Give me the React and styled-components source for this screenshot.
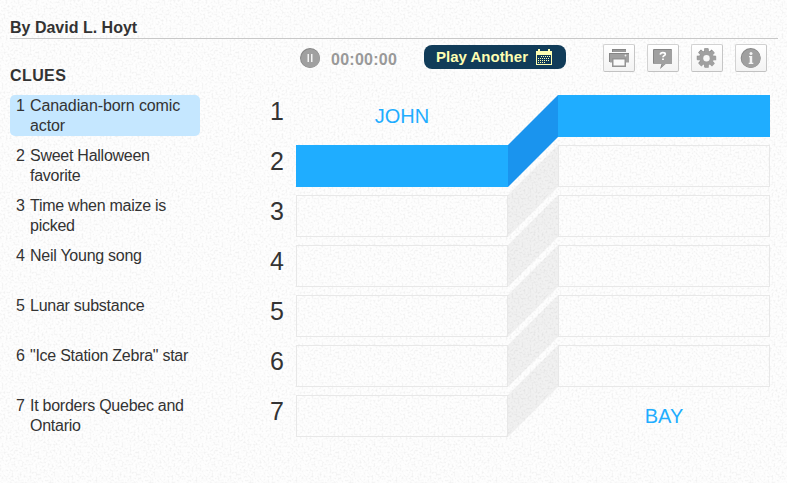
import React from "react";
import styled, { createGlobalStyle } from "styled-components";

const grain = encodeURIComponent(
  `<svg xmlns="http://www.w3.org/2000/svg" width="100" height="100"><filter id="n" x="0" y="0" width="100%" height="100%"><feTurbulence type="fractalNoise" baseFrequency="0.5" numOctaves="2" seed="4" stitchTiles="stitch"/><feColorMatrix values="0 0 0 0 0.5  0 0 0 0 0.5  0 0 0 0 0.5  0.55 0 0 0 -0.24"/></filter><rect width="100" height="100" filter="url(#n)"/></svg>`
);

const clues = [
  "Canadian-born comic actor",
  "Sweet Halloween favorite",
  "Time when maize is picked",
  "Neil Young song",
  "Lunar substance",
  '"Ice Station Zebra" star',
  "It borders Quebec and Ontario",
];

const links = [0, 1, 2, 3, 4, 5];

const PauseIcon = () => (
  <svg width="20" height="20" viewBox="0 0 20 20">
    <circle cx="10" cy="10" r="10" fill="#858585" />
    <circle cx="10.4" cy="10.4" r="9.4" fill="#a0a0a0" />
    <path d="M7.5 6h1.500v8H7.500zM11 6h1.500v8H11z" fill="#f4f4f4" />
  </svg>
);

const CalendarIcon = () => (
  <svg width="16" height="17" viewBox="0 0 16 17" shapeRendering="crispEdges">
    <path d="M0 2h2V0h2v2h8V0h2v2h2v14H0z" fill="#ffffb3" />
    <path d="M1 6h14v9H1z" fill="#113c59" />
    <path
      d="M5 7.500h9M2 9.500h12M2 11.500h12M2 13.500h7"
      stroke="#ffffb3"
      strokeWidth="1"
      strokeDasharray="1 1"
    />
  </svg>
);

const PrintIcon = () => (
  <svg width="30" height="26" viewBox="1 1 30 26">
    <path d="M9 5h14v3H9z" fill="#858585" />
    <path d="M10 6h13v2H10z" fill="#999" />
    <path d="M6 9h20v9H6z" fill="#858585" />
    <path d="M7 10h19v8.5H7z" fill="#a0a0a0" />
    <path d="M9 14h14v9H9z" fill="#949494" />
    <path d="M10.5 15.5h11v6h-11z" fill="#fafafa" />
    <circle cx="22.5" cy="11.5" r="0.9" fill="#eee" />
  </svg>
);

const HelpIcon = () => (
  <svg width="30" height="26" viewBox="1 1 30 26">
    <path d="M7 5h17q1 0 1 1v13q0 1-1 1h-5.500l-5.500 5 1.500-5H7q-1 0-1-1V6q0-1 1-1z" fill="#858585" />
    <path d="M7.500 6h17q.5 0 .5.500V19q0 1-1 1h-5.500l-4.500 4 1.500-4h-8q-.5 0-.5-.5V6.500q0-.5.500-.5z" fill="#a0a0a0" />
    <path
      d="M13.300 10.700q.2-2 2.600-2 2.400 0 2.400 1.500 0 1-1.300 1.500-1 .5-1 1.600"
      fill="none"
      stroke="#fff"
      strokeWidth="1.7"
    />
    <path d="M15.100 14.500h1.800v1.600h-1.800z" fill="#fff" />
  </svg>
);

const Cog = ({ color }) => (
  <g fill={color}>
    <circle r="7" />
    {[0, 45, 90, 135].map((a) => (
      <path key={a} d="M-2 -9.500h4L2.300 0 2 9.500h-4L-2.300 0z" transform={`rotate(${a})`} />
    ))}
  </g>
);

const GearIcon = () => (
  <svg width="30" height="26" viewBox="1 1 30 26">
    <g transform="translate(15.300 13.700)">
      <Cog color="#858585" />
    </g>
    <g transform="translate(15.700 14.300)">
      <Cog color="#a0a0a0" />
    </g>
    <circle cx="15.500" cy="14.200" r="3.200" fill="#f8f8f8" />
  </svg>
);

const InfoIcon = () => (
  <svg width="30" height="26" viewBox="1 1 30 26">
    <circle cx="15.700" cy="14" r="10" fill="#858585" />
    <circle cx="16" cy="14.400" r="9.500" fill="#a0a0a0" />
    <circle cx="16" cy="9.500" r="1.500" fill="#f4f4f4" />
    <path d="M14 12h3.200v6.700h1.100V20h-4.600v-1.300h1v-5.400H14z" fill="#f4f4f4" />
  </svg>
);

const App = () => {
  return (
    <>
      <GlobalStyle />
      <Page>
        <Byline>By David L. Hoyt</Byline>
        <Main>
          <Side>
            <Heading>CLUES</Heading>
            <ClueList>
              {clues.map((clue, i) => (
                <Clue key={clue} $active={i === 0}>
                  <span>{i + 1}</span>
                  <p>{clue}</p>
                </Clue>
              ))}
            </ClueList>
          </Side>
          <Game>
            <Toolbar>
              <PauseIcon />
              <Timer>00:00:00</Timer>
              <PlayButton>
                Play Another
                <CalendarIcon />
              </PlayButton>
              <Tools>
                <ToolButton aria-label="Print"><PrintIcon /></ToolButton>
                <ToolButton aria-label="Help"><HelpIcon /></ToolButton>
                <ToolButton aria-label="Settings"><GearIcon /></ToolButton>
                <ToolButton aria-label="Info"><InfoIcon /></ToolButton>
              </Tools>
            </Toolbar>
            <Board>
              <Column>
                {clues.map((clue, i) => (
                  <RowNumber key={clue}>{i + 1}</RowNumber>
                ))}
              </Column>
              <Column>
                <Word>JOHN</Word>
                {links.map((i) => (
                  <Slot key={i} $active={i === 0} />
                ))}
              </Column>
              <svg width="50" height="342" viewBox="0 0 50 342">
                {links.map((i) => (
                  <polygon
                    key={i}
                    points={`0,${i * 50 + 50} 50,${i * 50} 50,${i * 50 + 42} 0,${i * 50 + 92}`}
                    fill={i === 0 ? "#1a94ee" : "rgba(0, 0, 0, 0.05)"}
                  />
                ))}
              </svg>
              <Column>
                {links.map((i) => (
                  <Slot key={i} $active={i === 0} />
                ))}
                <Word>BAY</Word>
              </Column>
            </Board>
          </Game>
        </Main>
      </Page>
    </>
  );
};

export default App;

const GlobalStyle = createGlobalStyle`
  * {
    box-sizing: border-box;
  }
  body {
    margin: 0;
    overflow: hidden;
    color: #333;
    font-family: "Liberation Sans", Arial, sans-serif;
    font-size: 16px;
    background: #fefefe url("data:image/svg+xml,${grain}");
  }
  svg {
    display: block;
    flex: none;
  }
`;

const Page = styled.div`
  width: 787px;
  height: 483px;
  padding: 17px 9px 0 10px;
`;

const Byline = styled.div`
  height: 22px;
  line-height: 22px;
  font-weight: bold;
  border-bottom: 1px solid #c8c8c8;
`;

const Main = styled.div`
  display: flex;
`;

const Side = styled.div`
  width: 190px;
  padding-top: 26px;
`;

const Heading = styled.h2`
  margin: 0;
  height: 30px;
  font-size: 16px;
  line-height: 22px;
  letter-spacing: 0.4px;
`;

const ClueList = styled.div`
  display: flex;
  flex-direction: column;
  gap: 9px;
`;

const Clue = styled.div`
  display: flex;
  height: 41px;
  padding: 1px 0 0 6px;
  border-radius: 5px;
  line-height: 20px;
  letter-spacing: ${(props) => (props.$active ? "-0.1px" : "-0.26px")};
  background: ${(props) => (props.$active ? "#c5e7ff" : "transparent")};
  span {
    width: 14px;
  }
  p {
    margin: 0;
    width: 164px;
  }
`;

const Game = styled.div`
  margin-left: 70px;
  padding-top: 5px;
`;

const Toolbar = styled.div`
  display: flex;
  align-items: center;
  width: 497px;
  height: 28px;
  padding-left: 30px;
`;

const Timer = styled.span`
  width: 93px;
  padding: 3px 0 0 11px;
  font-weight: bold;
  letter-spacing: 0.25px;
  color: #999;
`;

const PlayButton = styled.button`
  display: flex;
  align-items: center;
  gap: 8px;
  width: 142px;
  height: 24px;
  margin-top: -3px;
  margin-left: 11px;
  padding: 0 0 0 12px;
  border: 0;
  border-radius: 8px;
  background: #113c59;
  color: #ffffb3;
  font: bold 15px "Liberation Sans", Arial, sans-serif;

  svg {
    margin-top: 1px;
  }
`;

const Tools = styled.div`
  display: flex;
  gap: 12px;
  margin-left: auto;
`;

const ToolButton = styled.button`
  width: 32px;
  height: 28px;
  padding: 0;
  border: 1px solid #d2d2d2;
  border-right-color: #c6c6c6;
  border-bottom-color: #c2c2c2;
  border-radius: 2px;
  background: linear-gradient(#fff, #f3f3f3);
`;

const Board = styled.div`
  display: grid;
  grid-template-columns: 26px 212px 50px 212px;
  padding-top: 23px;
`;

const Column = styled.div`
  display: flex;
  flex-direction: column;
  gap: 8px;
`;

const RowNumber = styled.div`
  height: 42px;
  font-size: 25px;
  line-height: 33px;
`;

const Word = styled.div`
  height: 42px;
  color: #1fadff;
  font-size: 20px;
  line-height: 42px;
  text-align: center;
`;

const Slot = styled.div`
  height: 42px;
  border: 1px solid ${(props) => (props.$active ? "#1fadff" : "#e8e8e8")};
  background: ${(props) => (props.$active ? "#1fadff" : "transparent")};
`;
